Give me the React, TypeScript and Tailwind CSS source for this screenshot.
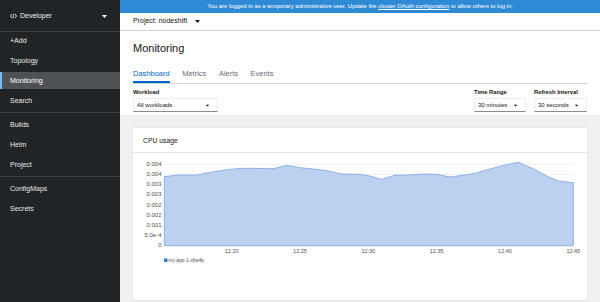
import React from "react";

const pts: [number, number][] = [
  [164.3, 176.7], [178.3, 175], [196.7, 175], [208, 172.7], [220, 170.7], [230, 169.3],
  [243, 168.3], [253, 168.3], [273, 168.7], [286.7, 165.3], [300, 167.7], [313.3, 169],
  [326.7, 170.7], [341.7, 174], [360, 174.3], [368.3, 175.7], [381.7, 179.3], [395, 175.3],
  [408.3, 175], [423.3, 174], [436.7, 174.3], [450, 177], [463.3, 175.3], [475, 173.3],
  [490, 169], [505, 165], [518.3, 162.3], [533.3, 168.7], [546.7, 176], [558.3, 181],
  [573.3, 182.7],
];

const yLabels = ["0.004", "0.004", "0.003", "0.003", "0.002", "0.002", "0.001", "5.0e-4", "0"];
const xLabels: [string, number][] = [
  ["12:20", 231.7], ["12:25", 300], ["12:30", 368.3], ["12:35", 436.7], ["12:40", 505], ["12:45", 573.3],
];

function Caret({ className = "" }: { className?: string }) {
  return (
    <svg width="5" height="3" viewBox="0 0 5 3" className={className}>
      <path d="M0 0 L5 0 L2.5 3 Z" fill="currentColor" />
    </svg>
  );
}

function NavLink({ label, active = false }: { label: string; active?: boolean }) {
  return (
    <div
      className={
        "h-[17px] flex items-center pt-[1px] text-[7px] " +
        (active ? "bg-[#4f5255] text-white border-l-2 border-[#73bcf7] pl-[8px]" : "text-[#e8e8e8] pl-[10px]")
      }
    >
      {label}
    </div>
  );
}

function Select({ label, width }: { label: string; width: string }) {
  return (
    <div
      className={
        "h-[14px] bg-white border border-[#ededed] border-b-[#8a8d90] flex items-center justify-between pl-[3px] pr-[7px] text-[6px] text-[#151515] " +
        width
      }
    >
      <span>{label}</span>
      <Caret className="text-[#151515] scale-75" />
    </div>
  );
}

function Chart() {
  const area =
    `M${pts[0][0]},245.7 ` + pts.map((p) => `L${p[0]},${p[1]}`).join(" ") + ` L573.3,245.7 Z`;
  const grid = Array.from({ length: 9 }, (_, i) => 164.3 + i * 10.175);
  return (
    <svg width="455" height="147" viewBox="133 153 455 147" className="block">
      {grid.map((y, i) => (
        <line key={i} x1="164.3" x2="573.3" y1={y} y2={y} stroke="#ececec" strokeWidth="0.8" />
      ))}
      <path d={area} fill="#bcd0ef" stroke="#86ace6" strokeWidth="0.9" />
      {grid.map((y, i) => (
        <text
          key={i}
          x="161.5"
          y={y}
          textAnchor="end"
          dominantBaseline="middle"
          fontSize="6"
          fill="#4f5255"
          fontFamily="'Liberation Sans', Arial, sans-serif"
        >
          {yLabels[i]}
        </text>
      ))}
      {xLabels.map(([t, x]) => (
        <text
          key={t}
          x={x}
          y="252"
          textAnchor="middle"
          dominantBaseline="middle"
          fontSize="5.5"
          fill="#4f5255"
          fontFamily="'Liberation Sans', Arial, sans-serif"
        >
          {t}
        </text>
      ))}
      <rect x="164" y="258.5" width="3.5" height="3.5" fill="#3a75c9" />
      <text
        x="168.3"
        y="260.4"
        dominantBaseline="middle"
        fontSize="4.8"
        fill="#4f5255"
        fontFamily="'Liberation Sans', Arial, sans-serif"
      >
        my-app-1-c6w4p
      </text>
    </svg>
  );
}

export default function App() {
  return (
    <div
      className="w-[600px] h-[302px] flex overflow-hidden bg-white"
      style={{ fontFamily: "'Liberation Sans', Arial, sans-serif" }}
    >
      {/* Sidebar */}
      <div className="w-[120px] shrink-0 bg-[#212427] flex flex-col">
        <div className="h-[32px] border-b border-[#3c3f42] flex items-center pl-[10px] pr-[13px] pt-[1px] text-[#f0f0f0]">
          <svg width="7" height="6" viewBox="0 0 14 12" className="mr-[3px]">
            <path d="M4 2 L0.8 6 L4 10" stroke="#e8e8e8" strokeWidth="1.8" fill="none" />
            <path d="M10 2 L13.2 6 L10 10" stroke="#e8e8e8" strokeWidth="1.8" fill="none" />
            <path d="M8.2 1 L5.8 11" stroke="#e8e8e8" strokeWidth="1.6" />
          </svg>
          <span className="text-[7px] flex-1">Developer</span>
          <Caret className="text-white" />
        </div>
        <div className="flex flex-col gap-[3px] pb-[3px] border-b border-[#3c3f42]">
          <NavLink label="+Add" />
          <NavLink label="Topology" />
          <NavLink label="Monitoring" active />
          <NavLink label="Search" />
        </div>
        <div className="flex flex-col gap-[3px] pt-[3px] pb-[3px] border-b border-[#3c3f42]">
          <NavLink label="Builds" />
          <NavLink label="Helm" />
          <NavLink label="Project" />
        </div>
        <div className="flex flex-col gap-[3px] pt-[3px]">
          <NavLink label="ConfigMaps" />
          <NavLink label="Secrets" />
        </div>
      </div>

      {/* Main */}
      <div className="flex-1 flex flex-col min-w-0">
        <div className="h-[13px] bg-[#2f8ad6] flex items-center justify-center text-white text-[5.9px] whitespace-nowrap">
          <span>
            You are logged in as a temporary administrative user. Update the{" "}
            <span className="underline">cluster OAuth configuration</span> to allow others to log in.
          </span>
        </div>
        <div className="h-[18px] border-b border-[#d2d2d2] flex items-center px-[13px] text-[7px] text-[#151515]">
          <span>Project: nodeshift</span>
          <Caret className="ml-[8px] text-[#151515]" />
        </div>
        <div className="h-[34px] flex items-center px-[13px] text-[11px] text-[#151515]">Monitoring</div>
        <div className="h-[19px] mx-[13px] border-b border-[#d2d2d2] flex gap-[12.5px] text-[7.5px]">
          <div className="h-[18px] flex items-center border-b-2 border-[#0066cc] text-[#0066cc] pt-[1px]">Dashboard</div>
          <div className="h-[18px] flex items-center text-[#6a6e73] pt-[1px] pb-[2px]">Metrics</div>
          <div className="h-[18px] flex items-center text-[#6a6e73] pt-[1px] pb-[2px]">Alerts</div>
          <div className="h-[18px] flex items-center text-[#6a6e73] pt-[1px] pb-[2px]">Events</div>
        </div>
        <div className="px-[13px] pt-[4px] pb-[3px] flex">
          <div className="flex flex-col">
            <div className="h-[8px] leading-[8px] mb-[2px] text-[5.8px] font-bold text-[#151515]">Workload</div>
            <Select label="All workloads" width="w-[85px]" />
          </div>
          <div className="flex-1" />
          <div className="flex flex-col">
            <div className="h-[8px] leading-[8px] mb-[2px] text-[5.8px] font-bold text-[#151515]">Time Range</div>
            <Select label="30 minutes" width="w-[52px]" />
          </div>
          <div className="flex flex-col ml-[8px]">
            <div className="h-[8px] leading-[8px] mb-[2px] text-[5.8px] font-bold text-[#151515]">Refresh Interval</div>
            <Select label="30 seconds" width="w-[53px]" />
          </div>
        </div>
        <div className="flex-1 bg-[#f0f0f0] px-[13px] pt-[13px] pb-[2px] flex flex-col">
          <div className="flex-1 bg-white shadow-[0_0_1px_rgba(0,0,0,0.2)] flex flex-col">
            <div className="h-[25px] border-b border-[#e4e4e4] flex items-center pl-[10px] pt-[2px] text-[6.8px] text-[#151515]">
              CPU usage
            </div>
            <Chart />
          </div>
        </div>
      </div>
    </div>
  );
}
